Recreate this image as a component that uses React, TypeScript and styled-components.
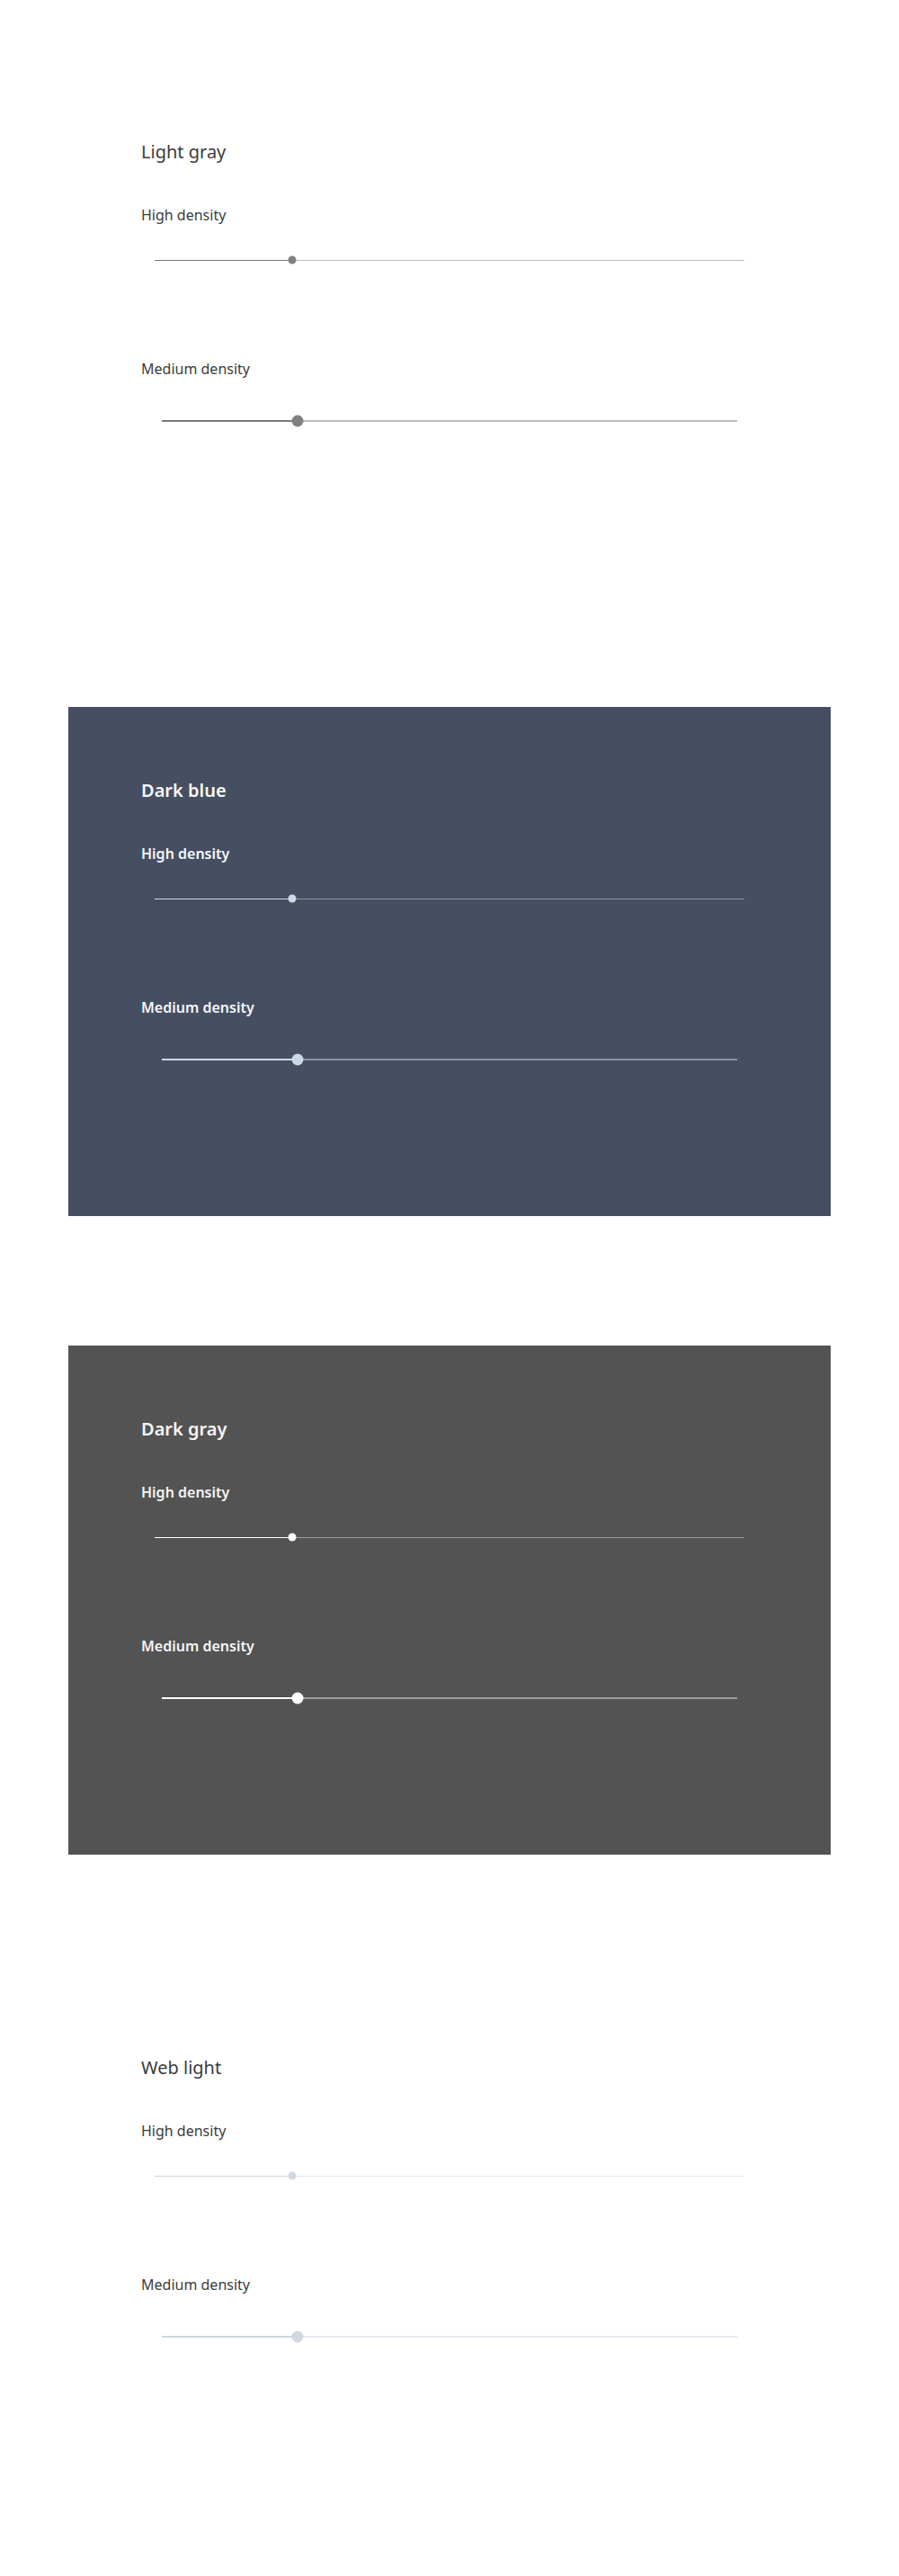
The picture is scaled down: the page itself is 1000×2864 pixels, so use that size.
import styled, { createGlobalStyle } from "styled-components";

interface Theme {
  name: string;
  bg: string;
  text: string;
  weight: number;
  fill: string;
  rest: string;
  thumb: string;
}

const themes: Theme[] = [
  {
    name: "Light gray",
    bg: "#ffffff",
    text: "#3c3c3c",
    weight: 400,
    fill: "#7a7a7a",
    rest: "#bdbdbd",
    thumb: "#808080",
  },
  {
    name: "Dark blue",
    bg: "#464f61",
    text: "#f5f7fa",
    weight: 600,
    fill: "#cdd8e6",
    rest: "#8c94a4",
    thumb: "#cdd8e6",
  },
  {
    name: "Dark gray",
    bg: "#535353",
    text: "#f5f5f5",
    weight: 600,
    fill: "#ffffff",
    rest: "#9c9c9c",
    thumb: "#ffffff",
  },
  {
    name: "Web light",
    bg: "#ffffff",
    text: "#3c3c3c",
    weight: 400,
    fill: "#cfd6df",
    rest: "#e6e9ee",
    thumb: "#d1d8e1",
  },
];

const GlobalStyle = createGlobalStyle`
  body {
    margin: 0;
    background: #ffffff;
    font-family: "Noto Sans", "Liberation Sans", sans-serif;
  }
`;

const Page = styled.div`
  display: flex;
  flex-direction: column;
  align-items: center;
  gap: 144px;
  padding: 76px 0 92px;
`;

const Panel = styled.section<{ $bg: string; $text: string; $weight: number }>`
  box-sizing: border-box;
  width: 848px;
  height: 566px;
  padding: 81px;
  background: ${(p) => p.$bg};
  color: ${(p) => p.$text};
  font-weight: ${(p) => p.$weight};
  display: flex;
  flex-direction: column;
`;

const Title = styled.h2`
  margin: 0 0 48px;
  font-size: 20px;
  line-height: 24px;
  font-weight: inherit;
`;

const Label = styled.div`
  font-size: 16px;
  line-height: 20px;
`;

const SliderRow = styled.div<{ $inset: number; $top: number; $bottom: number }>`
  position: relative;
  height: 24px;
  margin: ${(p) => `${p.$top}px ${p.$inset}px ${p.$bottom}px`};
  display: flex;
  align-items: center;
`;

const Track = styled.div<{ $h: number; $rest: string; $fill: string; $pct: number }>`
  position: relative;
  width: 100%;
  height: ${(p) => p.$h}px;
  background: linear-gradient(
    to right,
    ${(p) => p.$fill} 0,
    ${(p) => p.$fill} ${(p) => p.$pct}%,
    ${(p) => p.$rest} ${(p) => p.$pct}%,
    ${(p) => p.$rest} 100%
  );
`;

const Thumb = styled.span<{ $size: number; $color: string; $pct: number }>`
  position: absolute;
  top: 50%;
  left: ${(p) => p.$pct}%;
  width: ${(p) => p.$size}px;
  height: ${(p) => p.$size}px;
  border-radius: 50%;
  background: ${(p) => p.$color};
  transform: translate(-50%, -50%);
`;

interface SliderProps {
  theme: Theme;
  medium?: boolean;
}

const Slider: React.FC<SliderProps> = ({ theme, medium }) => {
  const pct = medium ? 23.6 : 23.3;
  return (
    <SliderRow
      $inset={medium ? 23 : 15}
      $top={medium ? 36 : 28}
      $bottom={medium ? 0 : 99}
    >
      <Track
        $h={medium ? 2 : 1}
        $fill={theme.fill}
        $rest={theme.rest}
        $pct={pct}
      >
        <Thumb $size={medium ? 13 : 9} $color={theme.thumb} $pct={pct} />
      </Track>
    </SliderRow>
  );
};

const ThemePanel: React.FC<{ theme: Theme }> = ({ theme }) => (
  <Panel $bg={theme.bg} $text={theme.text} $weight={theme.weight}>
    <Title>{theme.name}</Title>
    <Label>High density</Label>
    <Slider theme={theme} />
    <Label>Medium density</Label>
    <Slider theme={theme} medium />
  </Panel>
);

export default function App() {
  return (
    <>
      <GlobalStyle />
      <Page>
        {themes.map((t) => (
          <ThemePanel key={t.name} theme={t} />
        ))}
      </Page>
    </>
  );
}
